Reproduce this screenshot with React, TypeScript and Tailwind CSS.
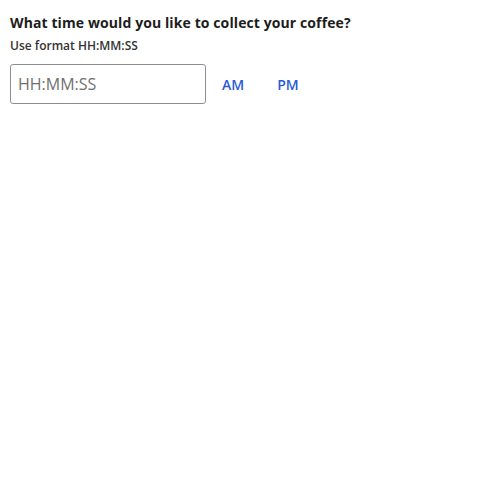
export default function App() {
  return (
    <div className="p-[10px] font-['Open_Sans',sans-serif] text-[#1d1d1d]">
      <h1 className="text-[14px] font-bold leading-[20px] mt-[3px] tracking-[0.1px]">What time would you like to collect your coffee?</h1>
      <p className="text-[12px] font-semibold leading-[16px] mt-[5px] text-[#333]">Use format HH:MM:SS</p>
      <div className="flex items-center mt-[10px]">
        <input
          placeholder="HH:MM:SS"
          className="w-[196px] h-[40px] border border-[#8a8d93] rounded-[3px] px-[7px] text-[16px] placeholder-[#707070] outline-none"
        />
        <button className="ml-[8px] px-[8px] h-[32px] text-[14px] font-semibold text-[#2a5bd7]">AM</button>
        <button className="ml-[17px] px-[8px] h-[32px] text-[14px] font-semibold text-[#2a5bd7]">PM</button>
      </div>
    </div>
  )
}
